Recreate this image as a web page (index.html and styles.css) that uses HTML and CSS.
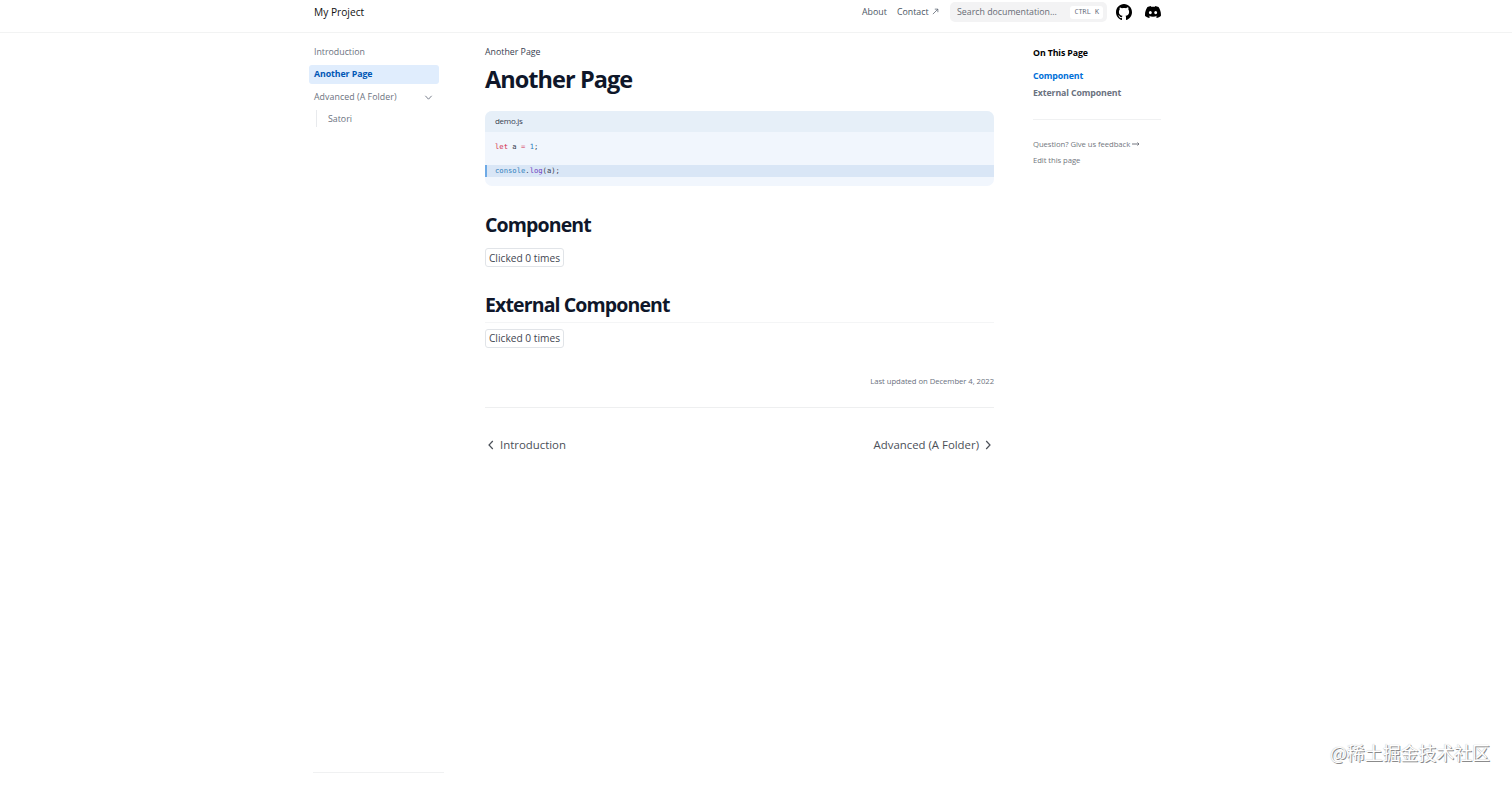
FILE: index.html
```html
<!DOCTYPE html>
<html lang="en">
<head>
    <meta charset="UTF-8">
    <meta name="viewport" content="width=device-width, initial-scale=1.0">
    <title>Another Page</title>
    <link rel="stylesheet" href="styles.css">
</head>
<body>
    <header class="navbar">
        <nav class="navbar-inner">
            <a class="logo" href="#">My Project</a>
            <a class="nav-link about" href="#">About</a>
            <a class="nav-link contact" href="#">Contact <svg class="arrow" viewBox="0 0 8 8"><path d="M1 7L6.500 1.500M3.200 1.300h3.500v3.500"/></svg></a>
            <div class="search">
                <span class="search-text">Search documentation...</span>
                <kbd>CTRL K</kbd>
            </div>
            <a class="icon github" href="#"><svg viewBox="3 3 18 18"><path d="M12 3C7.0275 3 3 7.12937 3 12.2276C3 16.3109 5.57625 19.7597 9.15374 20.9824C9.60374 21.0631 9.77249 20.7863 9.77249 20.5441C9.77249 20.3249 9.76125 19.5982 9.76125 18.8254C7.5 19.2522 6.915 18.2602 6.735 17.7412C6.63375 17.4759 6.19499 16.6569 5.8125 16.4378C5.4975 16.2647 5.0475 15.838 5.80124 15.8264C6.51 15.8149 7.01625 16.4954 7.18499 16.7723C7.99499 18.1679 9.28875 17.7758 9.80625 17.5335C9.885 16.9337 10.1212 16.53 10.38 16.2993C8.3775 16.0687 6.285 15.2728 6.285 11.7432C6.285 10.7397 6.63375 9.9092 7.20749 9.26326C7.1175 9.03257 6.8025 8.08674 7.2975 6.81794C7.2975 6.81794 8.05125 6.57571 9.77249 7.76377C10.4925 7.55615 11.2575 7.45234 12.0225 7.45234C12.7875 7.45234 13.5525 7.55615 14.2725 7.76377C15.9937 6.56418 16.7475 6.81794 16.7475 6.81794C17.2424 8.08674 16.9275 9.03257 16.8375 9.26326C17.4113 9.9092 17.76 10.7281 17.76 11.7432C17.76 15.2843 15.6563 16.0687 13.6537 16.2993C13.98 16.5877 14.2613 17.1414 14.2613 18.0065C14.2613 19.2407 14.25 20.2326 14.25 20.5441C14.25 20.7863 14.4188 21.0746 14.8688 20.9824C18.4238 19.7597 21 16.2993 21 12.2276C21 7.12937 16.9725 3 12 3Z"/></svg></a>
            <a class="icon discord" href="#"><svg viewBox="0 0 71 55"><path d="M60.1 4.9C55.6 2.8 50.7 1.3 45.7.4 45 1.6 44.3 2.9 43.7 4.3c-5.4-.8-10.9-.8-16.3 0C26.8 2.9 26.1 1.6 25.4.4 20.4 1.3 15.5 2.8 10.9 4.9 1.6 18.7-.9 32.2.3 45.4c6.2 4.6 12.3 7.4 17.8 9.1 1.500-2 2.700-4.100 3.800-6.300-2-.8-3.800-1.700-5.600-2.800l1.400-1.100c11.300 5.200 24 5.200 35.600 0l1.400 1.100c-1.800 1.100-3.700 2-5.600 2.800 1 2.200 2.300 4.300 3.600 6.300 6.200-1.900 12.500-4.700 17.800-9.100 1.500-15.300-2.400-28.700-10.400-40.500ZM23.700 37.300c-3.500 0-6.400-3.200-6.400-7.200s2.800-7.200 6.400-7.200c3.600 0 6.500 3.300 6.400 7.200 0 4-2.800 7.200-6.400 7.200Zm23.700 0c-3.500 0-6.400-3.200-6.400-7.200s2.800-7.200 6.400-7.200c3.600 0 6.500 3.300 6.400 7.200 0 4-2.800 7.200-6.400 7.200Z"/></svg></a>
        </nav>
    </header>

    <div class="container">
        <aside class="sidebar">
            <ul class="menu">
                <li><a href="#">Introduction</a></li>
                <li><a class="active" href="#">Another Page</a></li>
                <li>
                    <a href="#"><span class="folder">Advanced (A Folder)</span> <svg class="chevron" viewBox="0 0 8 8"><path d="M1.200 2.500L4 5.500l2.800-3"/></svg></a>
                    <ul class="submenu">
                        <li><a href="#">Satori</a></li>
                    </ul>
                </li>
            </ul>
            <div class="sidebar-footer"></div>
        </aside>

        <main class="content">
            <div class="breadcrumb"><span>Another Page</span></div>
            <h1><span>Another Page</span></h1>

            <div class="code-block">
                <div class="code-title"><span>demo.js</span></div>
                <pre><code><span class="line"><span class="keyword">let</span> a <span class="keyword">=</span> <span class="number">1</span>;</span><span class="line"> </span><span class="line highlighted"><span class="number">console</span>.<span class="function">log</span>(a);</span></code></pre>
            </div>

            <h2 class="first"><span>Component</span></h2>
            <button class="counter">Clicked 0 times</button>

            <h2 class="second"><span>External Component</span></h2>
            <button class="counter">Clicked 0 times</button>

            <div class="updated"><span>Last updated on December 4, 2022</span></div>

            <div class="pagination">
                <a href="#"><svg viewBox="0 0 12 12"><path d="M7.800 2L4 6l3.800 4"/></svg><span class="prev">Introduction</span></a>
                <a href="#"><span class="next">Advanced (A Folder)</span><svg viewBox="0 0 12 12"><path d="M4.200 2L8 6l-3.800 4"/></svg></a>
            </div>
        </main>

        <aside class="toc">
            <p class="toc-title">On This Page</p>
            <a class="toc-link current" href="#">Component</a>
            <a class="toc-link external" href="#">External Component</a>
            <div class="toc-footer">
                <a class="feedback" href="#">Question? Give us feedback <svg viewBox="0 0 8 6"><path d="M0 3h7M5.500 1.500L7 3 5.500 4.500"/></svg></a>
                <a class="edit" href="#">Edit this page</a>
            </div>
        </aside>
    </div>

    <div class="watermark">@稀土掘金技术社区</div>
</body>
</html>
```

FILE: styles.css
```css
* {
    box-sizing: border-box;
}
body {
    margin: 0;
    height: 786px;
    overflow: hidden;
    background: #fff;
    color: #374151;
    font-family: "Open Sans", "Noto Sans", sans-serif;
    font-size: 8.8px;
    line-height: 14px;
}
a {
    color: inherit;
    text-decoration: none;
    white-space: nowrap;
}
ul {
    list-style: none;
    margin: 0;
    padding: 0;
}
svg {
    fill: none;
    stroke: currentColor;
    flex-shrink: 0;
}
.navbar {
    height: 33px;
    border-bottom: 1px solid #f2f3f3;
}
.navbar-inner {
    display: flex;
    align-items: center;
    width: 847px;
    height: 24px;
    margin-left: 314px;
}
.logo {
    color: #111;
    font-size: 10.2px;
    margin-right: auto;
}
.nav-link {
    color: #4b5563;
}
.about {
    width: 35px;
}
.contact {
    width: 53px;
}
.arrow {
    width: 7px;
    height: 7px;
    margin-left: 1px;
    stroke-width: .8;
}
.search {
    display: flex;
    align-items: center;
    justify-content: space-between;
    width: 157px;
    height: 20px;
    padding: 0 4px 0 7px;
    border-radius: 5px;
    background: #f3f3f4;
    color: #676c75;
}
kbd {
    height: 13px;
    padding: 0 4px;
    border-radius: 3px;
    background: #fff;
    color: #6b7280;
    font-family: "DejaVu Sans Mono", monospace;
    font-size: 6.8px;
    line-height: 13px;
    white-space: pre;
}
.icon {
    display: flex;
    color: #000;
}
.icon svg {
    width: 16px;
    height: 16px;
    fill: currentColor;
    stroke: none;
}
.github {
    margin-left: 9px;
}
.discord {
    margin-left: 13px;
}
.container {
    display: grid;
    grid-template-columns: 135px 510px 128px;
    column-gap: 40px;
    margin-left: 309px;
    height: 753px;
}
.sidebar {
    display: flex;
    flex-direction: column;
    justify-content: space-between;
    padding: 9px 0 13px;
    color: #6b7280;
}
.menu {
    width: 130px;
}
.menu a {
    display: flex;
    align-items: center;
    justify-content: space-between;
    height: 19px;
    margin-bottom: 3.8px;
    padding: 0 6px 0 5px;
    border-radius: 3px;
}
.menu .active {
    background: #e0edfd;
    color: #0057b5;
    font-weight: 700;
    letter-spacing: -.08px;
}
.folder {
    letter-spacing: .06px;
}
.chevron {
    width: 9px;
    height: 9px;
    stroke-width: .8;
}
.submenu {
    margin-left: 7px;
    border-left: 1px solid #e8eaed;
    height: 17px;
}
.submenu a {
    height: 18px;
    padding-left: 11px;
}
.sidebar-footer {
    margin-left: 4px;
    border-top: 1px solid #f0f1f2;
}
.content {
    padding-top: 12px;
    margin-left: 1px;
}
h1, h2 {
    margin: 0;
    color: #0f172a;
    font-weight: 700;
}
h1 {
    margin-top: 5px;
    font-size: 23.5px;
    letter-spacing: -.95px;
    line-height: 31px;
}
.code-block {
    height: 75px;
    margin-top: 16px;
    border-radius: 7px;
    background: #f1f6fd;
    overflow: hidden;
}
.code-title {
    height: 21px;
    padding-left: 10px;
    background: #e6eff8;
    font-size: 8px;
    letter-spacing: -.3px;
    line-height: 20px;
}
pre {
    margin: 9px 0 0;
    font-family: "DejaVu Sans Mono", monospace;
    font-size: 7.2px;
    line-height: 12px;
}
code {
    font-family: inherit;
}
.line {
    display: block;
    height: 12px;
    padding-left: 10px;
}
.highlighted {
    padding-left: 8px;
    border-left: 2px solid #6eaae6;
    background: #d9e6f6;
}
.keyword {
    color: #d32f4d;
}
.number {
    color: #3180bd;
}
.function {
    color: #6f42c1;
}
h2 {
    font-size: 19.5px;
    letter-spacing: -.87px;
    line-height: 28px;
}
.first {
    margin-top: 25px;
}
.second {
    margin-top: 24px;
    height: 32px;
    border-bottom: 1px solid #f4f5f6;
}
.counter {
    display: block;
    width: 79px;
    height: 19px;
    margin-top: 9px;
    padding: 0;
    border: 1px solid #e1e4e8;
    border-radius: 3px;
    background: #fff;
    color: #3f4650;
    font: 10.2px/16px "Open Sans", sans-serif;
    white-space: nowrap;
}
.second + .counter {
    margin-top: 6px;
    line-height: 15px;
}
.updated {
    margin-top: 26px;
    color: #6b7280;
    font-size: 7.7px;
    letter-spacing: -.05px;
    text-align: right;
}
.pagination {
    display: flex;
    justify-content: space-between;
    margin-top: 19px;
    padding-top: 27px;
    border-top: 1px solid #eeeff0;
    color: #4b5058;
    font-size: 11.4px;
    line-height: 20px;
}
.pagination a {
    display: flex;
    align-items: center;
    gap: 3px;
}
.pagination svg {
    width: 12px;
    height: 12px;
    stroke-width: 1.2;
}
.toc {
    margin-left: -1px;
    padding-top: 13px;
    font-weight: 700;
    letter-spacing: -.12px;
}
.toc-title {
    margin: 0 0 9px;
    color: #000;
}
.toc-link {
    display: block;
    margin-bottom: 3.2px;
    color: #6b7280;
}
.toc .current {
    color: #0070d8;
}
.toc-footer {
    width: 128px;
    margin-top: 18.6px;
    padding-top: 17px;
    border-top: 1px solid #f0f1f2;
    color: #737780;
    font-size: 7.7px;
    font-weight: 400;
    letter-spacing: -.06px;
}
.toc-footer a {
    display: block;
    margin-bottom: 2px;
}
.toc-footer svg {
    width: 8px;
    height: 6px;
}
.watermark {
    position: absolute;
    right: 22px;
    bottom: 21px;
    color: #fff;
    font-family: "Noto Sans CJK SC", sans-serif;
    font-size: 17.9px;
    line-height: 26px;
    text-shadow: 0 0 1px #aaa, 1px 1px 0 #888;
}
```
